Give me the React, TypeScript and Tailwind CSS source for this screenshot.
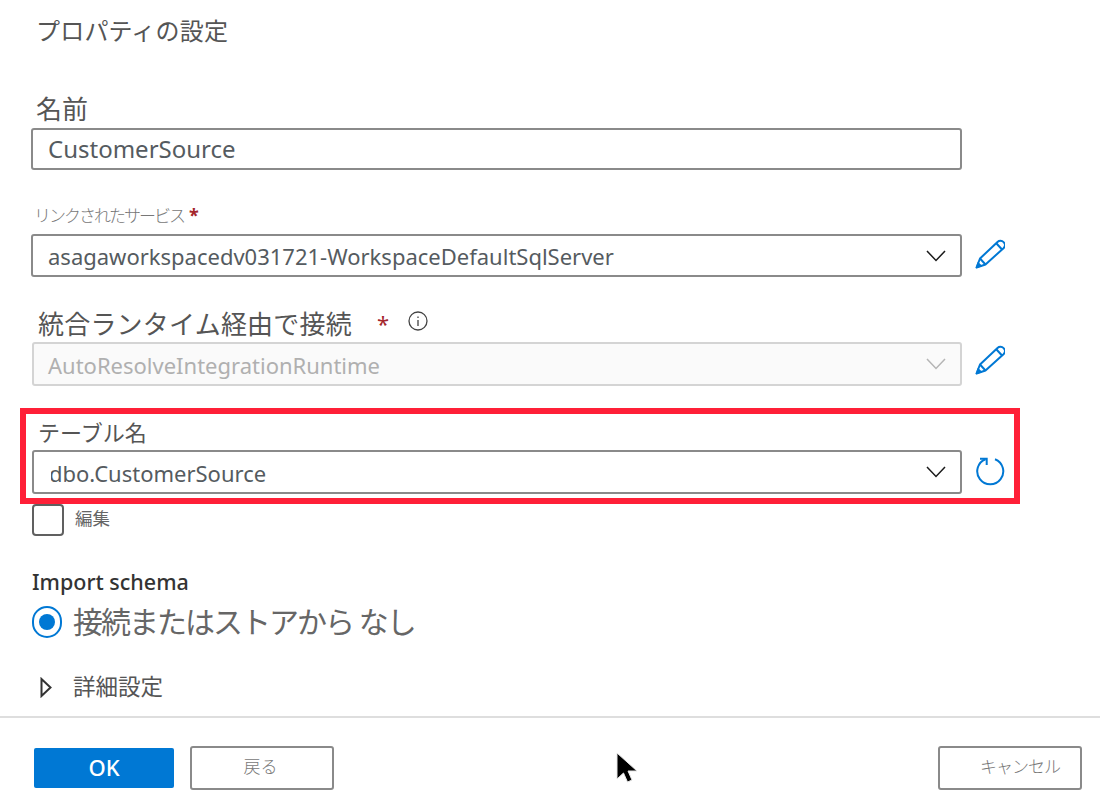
const ChevronDown = ({ muted }: { muted?: boolean }) => (
  <svg width="20" height="12" viewBox="0 0 20 12" fill="none" stroke={muted ? '#b5b5b5' : '#1a1a1a'} strokeWidth={1.5}>
    <path d="M1 1l9 9.5L19 1" />
  </svg>
);

const PencilIcon = () => (
  <svg width="30" height="30" viewBox="0 0 30 30" fill="none" stroke="#0078d4" strokeWidth={2}>
    <path d="M1.500 28.500L5 19.500 22.500 3a4.300 4.300 0 0 1 6 6.200L10.500 25.500z" strokeLinejoin="round" />
    <path d="M5 19.500l5.500 6M21.500 4.500l5.500 6" />
    <path d="M1 29l2-6 4 4z" fill="#0078d4" strokeWidth={0.5} />
  </svg>
);

const RefreshIcon = () => (
  <svg width="30" height="30" viewBox="0 0 30 30" fill="none" stroke="#0078d4" strokeWidth={2}>
    <path d="M20 2.200A13 13 0 1 1 10.500 2.200" />
    <path d="M5 1.800h6.700V8" />
  </svg>
);

function SelectBox({ value, muted, clip }: { value: string; muted?: boolean; clip?: boolean }) {
  return (
    <div
      className={`w-full h-full rounded-[3px] border-2 flex items-center justify-between pr-[14px] text-[22px] ${
        muted ? 'pl-[14px] border-[#d4d4d4] bg-[#fafafa] text-[#b0b0b0]' : 'pl-[15px] border-[#8a8a8a] bg-white text-[#555b60]'
      }`}
    >
      {clip ? (
        <span className="pt-[2px] ml-[2px] overflow-hidden indent-[-2px]">{value}</span>
      ) : (
        <span className="pt-[2px]">{value}</span>
      )}
      <ChevronDown muted={muted} />
    </div>
  );
}

export default function App() {
  return (
    <div className="relative w-[1100px] h-[808px] bg-white flex flex-col overflow-hidden text-[#555555] font-['Noto_Sans','Noto_Sans_CJK_JP',sans-serif]">
      <h1 className="ml-[36px] mt-[13px] h-[36px] text-[24px] leading-[36px] font-normal tracking-[0.2px]">プロパティの設定</h1>

      <label className="ml-[36px] mt-[45px] h-[30px] text-[26px] leading-[30px]">名前</label>
      <div className="ml-[31px] mt-[4px] w-[931px] h-[42px] rounded-[3px] border-2 border-[#8a8a8a] flex items-center pl-[15px] text-[24px] text-[#555b60]">
        CustomerSource
      </div>

      <label className="ml-[34px] mt-[33px] h-[24px] text-[17px] leading-[24px] font-light tracking-[-2px] text-[#777777]">
        リンクされたサービス<span className="ml-[5px] text-[18px] text-[#a4262c] font-bold">*</span>
      </label>
      <div className="ml-[31px] mt-[7px] flex items-center h-[43px]">
        <div className="w-[931px] h-full"><SelectBox value="asagaworkspacedv031721-WorkspaceDefaultSqlServer" /></div>
        <div className="ml-[13px] -mt-[4px]"><PencilIcon /></div>
      </div>

      <div className="ml-[38px] mt-[28px] h-[36px] flex items-center text-[26px] leading-[36px] tracking-[0.2px]">
        <span className="pt-[2px]">統合ランタイム経由で接続</span>
        <span className="ml-[25px] text-[#a4262c] text-[22px]">*</span>
        <svg className="ml-[19px] -mt-[4px]" width="20" height="20" viewBox="0 0 20 20" fill="none" stroke="#444444" strokeWidth={1.3}>
          <circle cx="10" cy="10" r="9" />
          <path d="M10 9v6M10 5.500v1.500" />
        </svg>
      </div>
      <div className="ml-[32px] mt-[1px] flex items-center h-[44px]">
        <div className="w-[930px] h-full"><SelectBox value="AutoResolveIntegrationRuntime" muted /></div>
        <div className="ml-[13px] -mt-[8px]"><PencilIcon /></div>
      </div>

      <div className="ml-[20px] mt-[22px] w-[1000px] h-[96px] border-[6px] border-[#ff2038] flex flex-col">
        <span className="ml-[12px] mt-[3px] h-[30px] text-[22px] leading-[30px]">テーブル名</span>
        <div className="ml-[6px] mt-[3px] flex items-center h-[44px]">
          <div className="w-[930px] h-full"><SelectBox value="dbo.CustomerSource" clip /></div>
          <div className="ml-[13px]"><RefreshIcon /></div>
        </div>
      </div>

      <div className="ml-[32px] h-[32px] flex items-start">
        <span className="w-[32px] h-[32px] rounded-[4px] border-2 border-[#606060]" />
        <span className="ml-[11px] text-[17.500px] leading-[28px] text-[#666666]">編集</span>
      </div>

      <div className="ml-[32px] mt-[32px] h-[28px] text-[21.500px] leading-[28px] font-medium text-[#333333]">Import schema</div>

      <div className="ml-[32px] mt-[8px] h-[36px] flex items-center">
        <span className="w-[30px] h-[32px] rounded-full border-2 border-[#0078d4] flex items-center justify-center">
          <span className="w-[16px] h-[16px] rounded-full bg-[#0078d4]" />
        </span>
        <span className="ml-[11px] text-[30px] leading-[36px] text-[#666666] tracking-[-2px]">接続またはストアから なし</span>
      </div>

      <div className="ml-[40px] mt-[32px] h-[30px] flex items-center">
        <svg width="12" height="21" viewBox="0 0 12 21" fill="none" stroke="#333333" strokeWidth={2}>
          <path d="M1.500 2v17l9-8.500z" />
        </svg>
        <span className="ml-[21px] text-[22.500px] leading-[30px]">詳細設定</span>
      </div>

      <div className="mt-[14px] h-[2px] bg-[#dedede]" />

      <div className="mt-[28px] h-[44px] flex items-center pl-[34px] pr-[18px]">
        <button className="w-[140px] h-[40px] rounded-[2px] bg-[#0078d4] text-white text-[22px] font-medium pb-[2px]">OK</button>
        <button className="ml-[16px] w-[144px] h-[44px] rounded-[3px] border-2 border-[#8a8a8a] text-[#777777] text-[17px] font-light pr-[3px] pb-[2px]">戻る</button>
        <button className="ml-auto w-[144px] h-[44px] rounded-[3px] border-2 border-[#8a8a8a] text-[#777777] text-[17px] font-light tracking-[-1px] pl-[20px] pb-[2px]">キャンセル</button>
      </div>

      {/* mouse pointer lying over the dialog */}
      <svg className="absolute left-[612px] top-[750px]" width="30" height="38" viewBox="0 0 30 38">
        <path d="M5 3v26l6.500-6 4 9 4.500-2-4-9h9z" fill="#000000" stroke="#e6e6e6" strokeWidth={1} />
      </svg>
    </div>
  );
}
